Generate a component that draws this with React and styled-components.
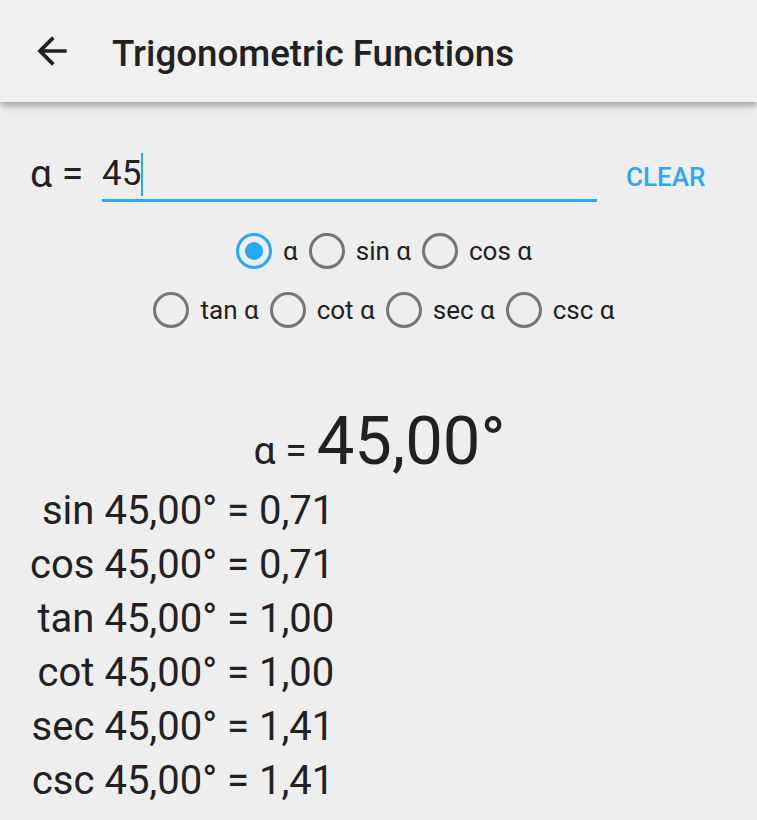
import React from "react";
import styled, { createGlobalStyle } from "styled-components";

const Global = createGlobalStyle`
  html, body { margin: 0; padding: 0; background: #eeeeee; }
  body { font-family: Roboto, "Noto Sans", "Liberation Sans", sans-serif; color: #212121; }
  * { box-sizing: border-box; }
`;

const BLUE = "#29a8f5";

const Page = styled.div`
  width: 757px;
  min-height: 820px;
  background: #eeeeee;
  overflow: hidden;
`;

const AppBar = styled.header`
  height: 102px;
  background: #f0f0f0;
  display: flex;
  align-items: center;
  padding-left: 30px;
  box-shadow: 0 3px 6px rgba(0, 0, 0, 0.28), 0 6px 10px rgba(0, 0, 0, 0.08);
  position: relative;
  z-index: 1;
`;

const BackIcon = styled.svg`
  width: 44px;
  height: 44px;
  flex: none;
  fill: #212121;
`;

const Title = styled.h1`
  margin: 5px 0 0 38px;
  font-size: 36.7px;
  font-weight: 500;
  letter-spacing: 0;
  color: #212121;
`;

const Content = styled.main`
  padding-top: 50px;
`;

const InputRow = styled.div`
  display: flex;
  align-items: center;
  padding-left: 30px;
`;

const InputLabel = styled.span`
  width: 72px;
  font-size: 39px;
  line-height: 44px;
  padding-bottom: 6px;
`;

const Field = styled.div`
  width: 495px;
  height: 50px;
  display: flex;
  align-items: center;
  font-size: 35px;
  line-height: 44px;
  padding-bottom: 3px;
  border-bottom: 3px solid ${BLUE};
`;

const Caret = styled.span`
  display: inline-block;
  width: 2px;
  height: 43px;
  background: ${BLUE};
`;

const ClearButton = styled.button`
  margin-left: 29px;
  padding: 0;
  border: none;
  background: none;
  color: ${BLUE};
  font-family: Roboto, "Noto Sans", sans-serif;
  font-size: 26px;
  font-weight: 500;
  line-height: 30px;
`;

const RadioRow = styled.div`
  display: flex;
  justify-content: center;
  align-items: center;
  margin-top: ${(p) => p.$top}px;
`;

const RadioItem = styled.label`
  display: flex;
  align-items: center;
  margin-left: 11px;
`;

const Ring = styled.span`
  width: 36px;
  height: 36px;
  border-radius: 50%;
  border: 3px solid ${(p) => (p.$checked ? BLUE : "#757575")};
  display: flex;
  align-items: center;
  justify-content: center;
  &::after {
    content: "";
    width: 18px;
    height: 18px;
    border-radius: 50%;
    background: ${BLUE};
    display: ${(p) => (p.$checked ? "block" : "none")};
  }
`;

const RadioText = styled.span`
  margin-left: 11px;
  font-size: 26px;
  line-height: 36px;
  color: #212121;
`;

const Heading = styled.div`
  margin-top: 80px;
  display: flex;
  justify-content: center;
  align-items: baseline;
  height: 66px;
  line-height: 66px;
  padding-left: 2px;
`;

const SmallEq = styled.span`
  font-size: 39px;
  margin-right: 10px;
`;

const BigValue = styled.span`
  font-size: 67px;
`;

const Results = styled.div`
  margin-top: 10px;
  padding-left: 30px;
  display: grid;
  grid-template-columns: auto auto;
  justify-content: start;
  column-gap: 10px;
  font-size: 40px;
  line-height: 54px;
`;

const FnName = styled.span`
  text-align: right;
`;

const FnValue = styled.span``;

const options1 = [
  { label: "α", checked: true },
  { label: "sin α" },
  { label: "cos α" },
];
const options2 = [
  { label: "tan α" },
  { label: "cot α" },
  { label: "sec α" },
  { label: "csc α" },
];

const results = [
  ["sin", "0,71"],
  ["cos", "0,71"],
  ["tan", "1,00"],
  ["cot", "1,00"],
  ["sec", "1,41"],
  ["csc", "1,41"],
];

function Radio({ label, checked }) {
  return (
    <RadioItem>
      <Ring $checked={checked} />
      <RadioText>{label}</RadioText>
    </RadioItem>
  );
}

export default function App() {
  return (
    <Page>
      <Global />
      <AppBar>
        <BackIcon viewBox="0 0 24 24">
          <path d="M20 11H7.83l5.59-5.59L12 4l-8 8 8 8 1.41-1.41L7.83 13H20v-2z" />
        </BackIcon>
        <Title>Trigonometric Functions</Title>
      </AppBar>
      <Content>
        <InputRow>
          <InputLabel>α =</InputLabel>
          <Field>
            45
            <Caret />
          </Field>
          <ClearButton>CLEAR</ClearButton>
        </InputRow>
        <RadioRow $top={31}>
          {options1.map((o) => (
            <Radio key={o.label} {...o} />
          ))}
        </RadioRow>
        <RadioRow $top={23}>
          {options2.map((o) => (
            <Radio key={o.label} {...o} />
          ))}
        </RadioRow>
        <Heading>
          <SmallEq>α =</SmallEq>
          <BigValue>45,00°</BigValue>
        </Heading>
        <Results>
          {results.map(([fn, v]) => (
            <React.Fragment key={fn}>
              <FnName>{fn}</FnName>
              <FnValue>45,00° = {v}</FnValue>
            </React.Fragment>
          ))}
        </Results>
      </Content>
    </Page>
  );
}
